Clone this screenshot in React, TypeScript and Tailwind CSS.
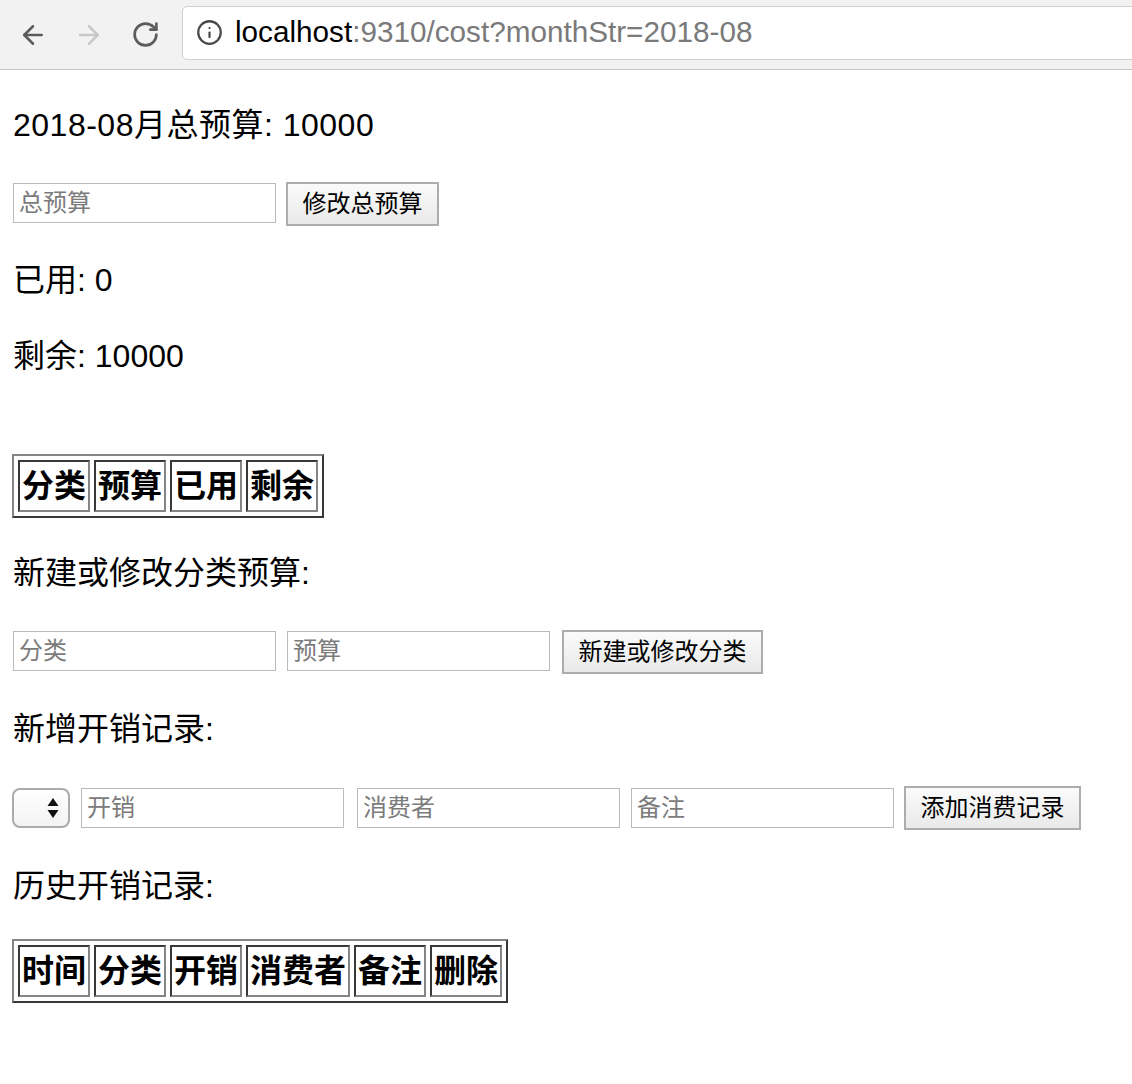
import { ArrowLeft, ArrowRight, RotateCw, Info } from "lucide-react";

const FONT = "font-['Liberation_Sans','Noto_Sans_CJK_SC',sans-serif]";

/* ── small form pieces ── */
function Field({ placeholder, className = "" }: { placeholder: string; className?: string }) {
  return (
    <input
      placeholder={placeholder}
      className={`h-[40px] w-[263px] shrink-0 border border-[#bababa] bg-white pl-[5px] text-[24px] text-black outline-none placeholder:text-[#7b7b7b] ${className}`}
    />
  );
}

function Btn({ label, className = "" }: { label: string; className?: string }) {
  return (
    <button
      className={`h-[44px] shrink-0 border-2 border-[#adadad] bg-gradient-to-b from-[#fbfbfb] to-[#e9e9e9] text-[24px] leading-none text-black ${className}`}
    >
      {label}
    </button>
  );
}

function HeadTable({ cols }: { cols: string[] }) {
  return (
    <table className="-ml-[1px] border-separate border-spacing-[4px] border-2 border-t-[#858585] border-l-[#858585] border-r-[#383838] border-b-[#383838]">
      <thead>
        <tr>
          {cols.map((c) => (
            <th
              key={c}
              className="border-2 border-t-[#383838] border-l-[#383838] border-r-[#858585] border-b-[#858585] p-[2px] text-[32px] font-bold leading-[44px] text-black"
            >
              {c}
            </th>
          ))}
        </tr>
      </thead>
    </table>
  );
}

export default function App() {
  return (
    <div className={`w-[1132px] min-h-[1084px] overflow-hidden bg-white ${FONT}`}>
      {/* ── browser chrome ── */}
      <div className="flex h-[70px] items-center overflow-hidden border-b border-[#c4c4c4] bg-[#f2f2f2]">
        <ArrowLeft className="ml-[18px] h-[30px] w-[30px] shrink-0 text-[#5c5c5c]" strokeWidth={2} />
        <ArrowRight className="ml-[26px] h-[30px] w-[30px] shrink-0 text-[#c9c9c9]" strokeWidth={2} />
        <RotateCw className="ml-[27px] h-[29px] w-[29px] shrink-0 text-[#5c5c5c]" strokeWidth={2.2} />
        <div className="ml-[22px] -mt-[4px] flex h-[54px] w-[980px] shrink-0 items-center rounded-[5px] border border-[#cfcfcf] bg-white">
          <Info className="ml-[13px] h-[27px] w-[27px] shrink-0 text-[#4a4a4a]" strokeWidth={2} />
          <span className="ml-[12px] text-[29.7px] text-black">
            localhost<span className="text-[#7a7a7a]">:9310/cost?monthStr=2018-08</span>
          </span>
        </div>
      </div>

      {/* ── page content ── */}
      <div className="pl-[13px] text-black">
        <p className="mt-[37px] text-[32px] leading-[37px] tracking-[0.5px]">2018-08月总预算: 10000</p>

        <div className="mt-[38px] flex items-start">
          <Field placeholder="总预算" className="mt-[1px]" />
          <Btn label="修改总预算" className="ml-[10px] w-[153px]" />
        </div>

        <p className="mt-[36px] text-[32px] leading-[37px]">已用: 0</p>
        <p className="mt-[39px] text-[32px] leading-[37px]">剩余: 10000</p>

        <div className="mt-[79px]">
          <HeadTable cols={["分类", "预算", "已用", "剩余"]} />
        </div>

        <p className="mt-[37px] text-[32px] leading-[37px]">新建或修改分类预算:</p>

        <div className="mt-[38px] flex items-start">
          <Field placeholder="分类" className="mt-[1px]" />
          <Field placeholder="预算" className="ml-[11px] mt-[1px]" />
          <Btn label="新建或修改分类" className="ml-[12px] w-[201px]" />
        </div>

        <p className="mt-[37px] text-[32px] leading-[37px]">新增开销记录:</p>

        <div className="mt-[38px] flex items-start">
          <div className="-ml-[1px] mt-[2px] flex h-[40px] w-[58px] shrink-0 items-center justify-end rounded-[8px] border-2 border-[#ababab] bg-gradient-to-b from-white to-[#f3f3f3] pr-[9px]">
            <svg width="12" height="22" viewBox="0 0 12 22">
              <path d="M6 1 L11.5 9 L0.5 9 Z" fill="#111" />
              <path d="M6 21 L11.5 13 L0.5 13 Z" fill="#111" />
            </svg>
          </div>
          <Field placeholder="开销" className="ml-[11px] mt-[2px]" />
          <Field placeholder="消费者" className="ml-[13px] mt-[2px]" />
          <Field placeholder="备注" className="ml-[11px] mt-[2px]" />
          <Btn label="添加消费记录" className="ml-[10px] w-[177px]" />
        </div>

        <p className="mt-[38px] text-[32px] leading-[37px]">历史开销记录:</p>

        <div className="mt-[34px]">
          <HeadTable cols={["时间", "分类", "开销", "消费者", "备注", "删除"]} />
        </div>
      </div>
    </div>
  );
}
